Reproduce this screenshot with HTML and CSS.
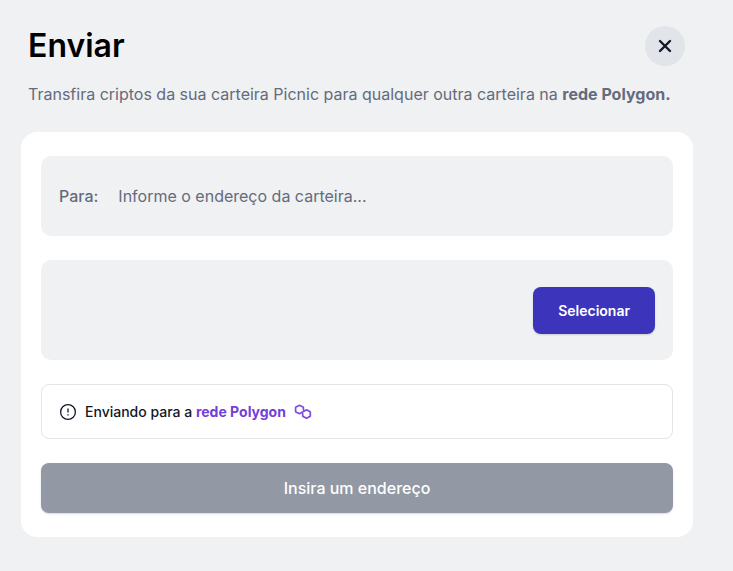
FILE: index.html
```html
<!DOCTYPE html>
<html lang="pt-BR">
<head>
    <meta charset="UTF-8">
    <meta name="viewport" content="width=device-width, initial-scale=1.0">
    <title>Enviar - Picnic</title>
    <link rel="stylesheet" href="styles.css">
</head>
<body>
    <main class="container">
        <header class="header">
            <div class="title-row">
                <h1>Enviar</h1>
                <button type="button" class="close" aria-label="Fechar">
                    <svg width="14" height="14" viewBox="0 0 14 14" fill="none" stroke="currentColor" stroke-width="2.4" stroke-linecap="round">
                        <path d="M2 2l10 10M12 2L2 12"/>
                    </svg>
                </button>
            </div>
            <p>Transfira criptos da sua carteira Picnic para qualquer outra carteira na <strong>rede Polygon.</strong></p>
        </header>

        <form class="card">
            <div class="field">
                <label for="address">Para:</label>
                <input type="text" id="address" placeholder="Informe o endereço da carteira...">
            </div>

            <div class="token">
                <button type="button" class="select">Selecionar</button>
            </div>

            <div class="notice">
                <svg width="18" height="18" viewBox="0 0 18 18" fill="none" stroke="currentColor" stroke-width="1.3">
                    <circle cx="9" cy="9" r="7.4"/>
                    <path d="M9 5.6v4M9 11.2v1.3"/>
                </svg>
                <span>Enviando para a <a href="#">rede Polygon</a></span>
                <svg class="polygon" width="18" height="16" viewBox="0 0 18 16" fill="none" stroke="currentColor" stroke-width="1.7" stroke-linejoin="round" stroke-linecap="round">
                    <path d="M9.4 5.6V3.6Q9.4 3.2 9 3L5.9 1.4Q5.5 1.2 5.1 1.4L2 3.1Q1.6 3.3 1.6 3.8V7.2Q1.6 7.7 2 7.9L5.1 9.6Q5.5 9.8 5.9 9.6L12.1 5.9Q12.5 5.7 12.9 5.9L15.9 7.6Q16.3 7.8 16.3 8.3V11.7Q16.3 12.2 15.9 12.4L12.9 14.1Q12.5 14.3 12.1 14.1L9.1 12.4Q8.7 12.2 8.7 11.7V9.8"/>
                </svg>
            </div>

            <button type="submit" class="submit">Insira um endereço</button>
        </form>
    </main>
</body>
</html>
```
FILE: styles.css
```css
* {
    box-sizing: border-box;
}
body {
    margin: 0;
    font-family: Inter, "Liberation Sans", sans-serif;
    background: #f0f1f3;
    color: #111827;
}
button,
input {
    font-family: inherit;
}
.container {
    padding: 24px 40px 34px 21px;
}
.header {
    padding: 0 8px 0 7px;
}
.title-row {
    display: flex;
    align-items: center;
    justify-content: space-between;
}
h1 {
    margin: 0;
    font-size: 32px;
    line-height: 44px;
    font-weight: 600;
    color: #000;
}
.header p {
    margin: 14px 0 26px;
    font-size: 16px;
    line-height: 24px;
    color: #646b7b;
}
.header strong {
    font-weight: 700;
}
.close {
    display: flex;
    align-items: center;
    justify-content: center;
    width: 40px;
    height: 40px;
    padding: 0;
    border: none;
    border-radius: 50%;
    background: #e1e4e9;
    color: #111827;
    cursor: pointer;
}
.card {
    display: flex;
    flex-direction: column;
    gap: 24px;
    padding: 24px 20px;
    border-radius: 16px;
    background: #fff;
}
.field {
    display: flex;
    align-items: center;
    gap: 20px;
    padding: 20px 18px;
    border-radius: 10px;
    background: #f0f1f3;
    color: #646b7b;
}
.field label {
    font-size: 16px;
    font-weight: 500;
}
.field input {
    flex: 1;
    min-width: 0;
    height: 40px;
    padding: 0;
    border: none;
    outline: none;
    background: transparent;
    font-size: 16px;
    color: #111827;
}
.field input::placeholder {
    color: #646b7b;
    opacity: 1;
}
.token {
    display: flex;
    align-items: center;
    justify-content: flex-end;
    min-height: 100px;
    padding: 0 18px;
    border-radius: 10px;
    background: #f0f1f3;
}
.select {
    padding: 13px 25px;
    border: none;
    border-radius: 8px;
    background: #3c35bc;
    color: #fff;
    font-size: 14px;
    line-height: 21px;
    font-weight: 600;
    box-shadow: 0 1px 2px rgba(0,0,0,0.15);
    cursor: pointer;
}
.notice {
    display: flex;
    align-items: center;
    gap: 8px;
    padding: 16px 17px;
    border: 1px solid #e3e4e8;
    border-radius: 8px;
    font-size: 14px;
    line-height: 21px;
    font-weight: 500;
}
.notice a {
    color: #7340d8;
    font-weight: 700;
    text-decoration: none;
}
.polygon {
    color: #7f4bdc;
}
.submit {
    padding: 13px 24px;
    border: none;
    border-radius: 8px;
    background: #9298a4;
    color: #fff;
    font-size: 16px;
    line-height: 24px;
    font-weight: 500;
    box-shadow: 0 1px 2px rgba(0,0,0,0.15);
    cursor: pointer;
}
```
